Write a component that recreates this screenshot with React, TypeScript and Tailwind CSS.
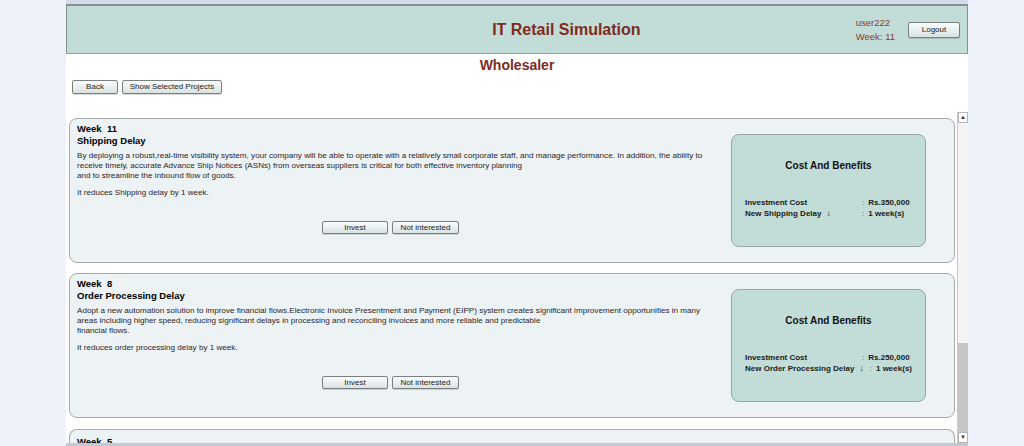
import React from 'react';

// Projects shown in the wholesaler list
type Project = {
  week: number;
  title: string;
  lines: string[];
  effect: string;
  cost: string;
  delayLabel: string;
  delay: string;
};

const PROJECTS: Project[] = [
  {
    week: 11,
    title: 'Shipping Delay',
    lines: [
      'By deploying a robust,real-time visibility system, your company will be able to operate with a relatively small corporate staff, and manage performance. In addition, the ability to',
      'receive timely, accurate Advance Ship Notices (ASNs) from overseas suppliers is critical for both effective inventory planning',
      'and to streamline the inbound flow of goods.',
    ],
    effect: 'It reduces Shipping delay by 1 week.',
    cost: 'Rs.350,000',
    delayLabel: 'New Shipping Delay',
    delay: '1 week(s)',
  },
  {
    week: 8,
    title: 'Order Processing Delay',
    lines: [
      'Adopt a new automation solution to improve financial flows.Electronic Invoice Presentment and Payment (EIPP) system creates significant improvement opportunities in many',
      'areas including higher speed, reducing significant delays in processing and reconciling invoices and more reliable and predictable',
      'financial flows.',
    ],
    effect: 'It reduces order processing delay by 1 week.',
    cost: 'Rs.250,000',
    delayLabel: 'New Order Processing Delay',
    delay: '1 week(s)',
  },
];

const FONT = "font-['Liberation_Sans',Arial,sans-serif]";

const Btn = ({ children, className = '' }: { children: React.ReactNode; className?: string }) => (
  <button
    className={`flex items-center justify-center rounded-[2px] border border-[#7a7f80] bg-gradient-to-b from-[#fbfdfd] to-[#d9e2e2] text-[8px] leading-none text-[#222] shadow-[0_1px_0_rgba(0,0,0,0.15)] ${className}`}
  >
    {children}
  </button>
);

const ProjectCard = ({ p }: { p: Project }) => (
  <div className="flex shrink-0 items-center rounded-[8px] border border-[#a9acad] bg-[#edf2f5] pl-[7px] pr-[28px]">
    {/* --- DESCRIPTION --- */}
    <div className="w-[627px] pt-[4px] pb-[28px] text-[#2a262a]">
      <div className="whitespace-pre text-[9.5px] font-bold leading-[11px] text-black">{`Week  ${p.week}`}</div>
      <div className="mt-[1px] text-[9.5px] font-bold leading-[12px] text-black">{p.title}</div>
      <div className="mt-[4px] text-[8.1px] leading-[10px]">
        {p.lines.map((l) => (
          <div key={l} className="whitespace-nowrap">{l}</div>
        ))}
      </div>
      <div className="mt-[7px] text-[8.1px] leading-[10px]">{p.effect}</div>
      <div className="mt-[23px] flex justify-center gap-[4px]">
        <Btn className="h-[13px] w-[66px]">Invest</Btn>
        <Btn className="h-[13px] w-[67px]">Not interested</Btn>
      </div>
    </div>

    {/* --- COST PANEL --- */}
    <div className="ml-auto h-[113px] w-[195px] rounded-[8px] border border-[#9aa5a3] bg-[#c2dcd7] px-[13px] pt-[24px]">
      <div className="text-center text-[10px] font-bold leading-[14px] text-[#111]">Cost And Benefits</div>
      <div className="mt-[24px] text-[8px] font-bold leading-[11px] text-[#1a1a1a]">
        <div className="flex whitespace-nowrap">
          <span className="min-w-[112px]">Investment Cost</span>
          <span className="ml-[5px] font-normal text-[#666]">:</span>
          <span className="ml-[4px]">{p.cost}</span>
        </div>
        <div className="flex whitespace-nowrap">
          <span className="min-w-[112px]">
            {p.delayLabel}
            <span className="ml-[5px] mr-[5px]">↓</span>
          </span>
          <span className="ml-[5px] font-normal text-[#666]">:</span>
          <span className="ml-[4px]">{p.delay}</span>
        </div>
      </div>
    </div>
  </div>
);

const App = () => {
  return (
    <div className={`flex h-[446px] overflow-hidden bg-[#eef2fa] ${FONT}`}>
      <div className="ml-[66px] flex w-[902px] flex-col bg-white">
        {/* top strip */}
        <div className="h-[4px] shrink-0 bg-[#d4dcea]" />

        {/* --- HEADER --- */}
        <div className="flex h-[50px] shrink-0 items-center border-x border-t-2 border-b border-[#8a8d8e] border-b-[#9a9d9e] bg-[#c2dcd7]">
          <div className="w-[210px]" />
          <div className="flex-1 text-center text-[16px] font-bold text-[#7e2b1d]">IT Retail Simulation</div>
          <div className="flex items-center gap-[13px] pr-[7px]">
            <div className="text-[9.5px] leading-[14px] text-[#8a3b2c]">
              <div>user222</div>
              <div>Week: 11</div>
            </div>
            <Btn className="h-[16px] w-[52px]">Logout</Btn>
          </div>
        </div>

        <div className="pt-[3px] text-center text-[14px] font-bold leading-[16px] text-[#7e2b1d]">Wholesaler</div>

        <div className="mt-[7px] flex gap-[4px] pl-[6px]">
          <Btn className="h-[14px] w-[46px]">Back</Btn>
          <Btn className="h-[14px] w-[100px]">Show Selected Projects</Btn>
        </div>

        {/* --- PROJECT LIST --- */}
        <div className="mt-[18px] flex min-h-0 flex-1">
          <div className="flex flex-1 flex-col gap-[10px] overflow-hidden pl-[3px] pr-[2px] pt-[6px]">
            {PROJECTS.map((p) => (
              <ProjectCard key={p.week} p={p} />
            ))}
            <div className="mt-[1px] shrink-0 rounded-t-[8px] border border-b-0 border-[#a9acad] bg-[#edf2f5] pl-[7px] pt-[6px]">
              <div className="whitespace-pre text-[9.5px] font-bold leading-[11px]">{'Week  5'}</div>
            </div>
          </div>
          {/* fake scrollbar */}
          <div className="flex w-[11px] flex-col border-l border-[#c9c9c9] bg-[#f4f4f4]">
            <div className="flex h-[11px] items-center justify-center border border-[#b5b5b5] bg-white text-[6px] text-[#333]">▲</div>
            <div className="flex-1" />
            <div className="h-[89px] bg-[#c6c6c6]" />
            <div className="flex h-[11px] items-center justify-center border border-[#b5b5b5] bg-white text-[6px] text-[#333]">▼</div>
          </div>
        </div>

        <div className="h-[3px] shrink-0 bg-[#c3cad2]" />
      </div>
    </div>
  );
};

export default App;
